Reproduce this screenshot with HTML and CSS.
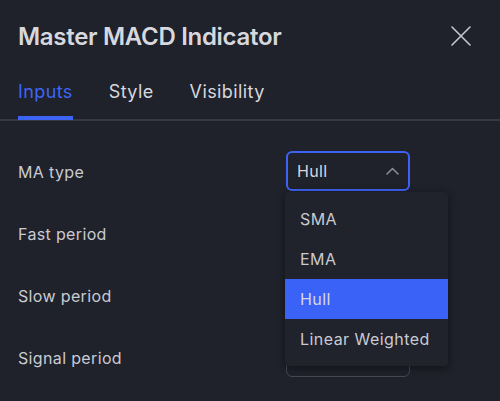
FILE: index.html
```html
<!DOCTYPE html>
<html>
<head>
<meta charset="utf-8">
<link rel="stylesheet" href="styles.css">
</head>
<body>
<div class="dialog">
  <div class="header">
    <div class="title">Master MACD Indicator</div>
    <button class="close" aria-label="Close">
      <svg width="20" height="20" viewBox="0 0 20 20"><path d="M1 1 L19 19 M19 1 L1 19" stroke="currentColor" stroke-width="1.6" fill="none" stroke-linecap="round"/></svg>
    </button>
  </div>
  <div class="tabs">
    <div class="tab active">Inputs</div>
    <div class="tab">Style</div>
    <div class="tab">Visibility</div>
  </div>
  <div class="form">
    <div class="row">
      <div class="label">MA type</div>
      <div class="control">
        <div class="select open">
          <span>Hull</span>
          <svg class="chev" width="13" height="8" viewBox="0 0 13 8"><path d="M1 7 L6.5 1.5 L12 7" stroke="currentColor" stroke-width="1.5" fill="none" stroke-linecap="round" stroke-linejoin="round"/></svg>
        </div>
        <div class="menu">
          <div class="item">SMA</div>
          <div class="item">EMA</div>
          <div class="item selected">Hull</div>
          <div class="item">Linear Weighted</div>
        </div>
      </div>
    </div>
    <div class="row">
      <div class="label">Fast period</div>
      <div class="control"><div class="input"></div></div>
    </div>
    <div class="row">
      <div class="label">Slow period</div>
      <div class="control"><div class="input"></div></div>
    </div>
    <div class="row">
      <div class="label">Signal period</div>
      <div class="control"><div class="input"></div></div>
    </div>
  </div>
</div>
</body>
</html>
```
FILE: styles.css
```css
* { box-sizing: border-box; }
html, body {
  margin: 0;
  padding: 0;
  background: #1f212b;
  font-family: Inter, "Noto Sans", sans-serif;
  width: 500px;
  height: 401px;
  overflow: hidden;
}
.dialog {
  width: 500px;
}
.header {
  display: flex;
  align-items: center;
  justify-content: space-between;
  height: 72px;
  padding: 0 29px 0 18px;
}
.title {
  color: #d6d8de;
  font-size: 24px;
  font-weight: 600;
  letter-spacing: -0.3px;
}
.close {
  background: none;
  border: 0;
  padding: 0;
  color: #c6c8cf;
  width: 20px;
  height: 20px;
  display: flex;
}
.tabs {
  display: flex;
  gap: 36px;
  padding: 0 18px;
  border-bottom: 2px solid #363944;
  height: 121px;
  margin-top: -72px;
  padding-top: 78px;
}
.tab {
  color: #d6d8de;
  font-size: 18px;
  letter-spacing: 0.4px;
  height: 42px;
  line-height: 28px;
  margin-bottom: -1px;
}
.tab.active {
  color: #3d66f5;
  border-bottom: 4px solid #3d63f5;
}
.form {
  padding: 30px 0 0 18px;
  display: flex;
  flex-direction: column;
  gap: 22px;
}
.row {
  display: flex;
  align-items: center;
  height: 40px;
}
.label {
  width: 268px;
  color: #c9cbd2;
  font-size: 16px;
  letter-spacing: 0.35px;
  padding-top: 1px;
}
.control {
  position: relative;
  width: 124px;
}
.select {
  height: 40px;
  border: 2px solid #3d63f5;
  border-radius: 6px;
  display: flex;
  align-items: center;
  justify-content: space-between;
  padding: 0 9px 0 9px;
  color: #d6d8de;
  font-size: 16px;
  letter-spacing: 0.35px;
}
.chev {
  color: #8b8e98;
  margin-top: -1px;
}
.input {
  height: 40px;
  border: 1px solid #454855;
  border-radius: 6px;
}
.menu {
  position: absolute;
  top: 41px;
  left: -1px;
  width: 163px;
  padding: 7px 0;
  background: #20222c;
  border-radius: 4px;
  box-shadow: 0 2px 8px rgba(0, 0, 0, 0.45);
  z-index: 2;
}
.item {
  height: 40px;
  line-height: 40px;
  padding-left: 15px;
  color: #c9cbd2;
  font-size: 16px;
  letter-spacing: 0.45px;
}
.item.selected {
  background: #3b62f6;
  color: #d6d8e8;
}
```
